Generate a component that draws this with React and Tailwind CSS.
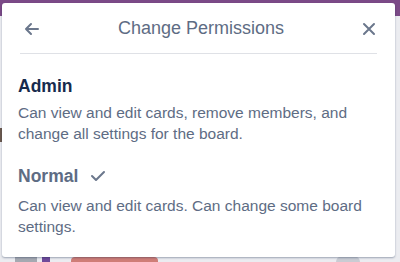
import React from "react";

export default function App() {
  return (
    <div className="relative w-[400px] h-[262px] overflow-hidden bg-[#ebecf0] pt-[3px] pl-[2px]" style={{ fontFamily: '"Liberation Sans", Arial, sans-serif' }}>
      {/* board behind the popover */}
      <div className="absolute inset-x-0 top-0 h-[16px] bg-[#7b4a87]" />
      <div className="absolute left-0 top-[128px] w-[3px] h-[14px] bg-[#6b5a4e]" />
      <div className="absolute left-0 bottom-0 flex items-end gap-[5px] pl-[15px] w-full">
        <div className="w-[22px] h-[5px] bg-[#a5a9b1]" />
        <div className="w-[8px] h-[8px] bg-[#6f4a9a]" />
        <div className="ml-[16px] w-[87px] h-[5px] rounded-t-[4px] bg-[#cf7d77]" />
        <div className="ml-auto mr-[40px] w-[24px] h-[6px] rounded-t-full bg-[#c9ccd3]" />
      </div>

      {/* popover */}
      <div className="relative w-[393px] h-[254px] bg-white rounded-[3px] shadow-[0_1px_2px_rgba(9,30,66,0.35)] px-[16px]">
        <div className="flex items-center justify-between h-[50px] pl-[6px] pr-[3px] pt-[1px]">
          <svg width="16" height="14" viewBox="0 0 16 14" fill="none" stroke="#6b778c" strokeWidth="2" strokeLinecap="round" strokeLinejoin="round">
            <path d="M14 7H2M7 2L2 7l5 5" />
          </svg>
          <span className="text-[18px] text-[#5e6c84]">Change Permissions</span>
          <svg width="14" height="14" viewBox="0 0 14 14" fill="none" stroke="#6b778c" strokeWidth="2" strokeLinecap="round">
            <path d="M2 2l10 10M12 2L2 12" />
          </svg>
        </div>
        <div className="h-px bg-[#dfe1e6] mx-[2px]" />
        <div className="pt-[22px]">
          <div className="text-[17.5px] font-bold text-[#172b4d] leading-[20px]">Admin</div>
          <p className="mt-[6px] text-[15.5px] leading-[21px] text-[#5e6c84]">
            Can view and edit cards, remove members, and change all settings for the board.
          </p>
          <div className="mt-[22px] flex items-center gap-[12px]">
            <span className="text-[17.5px] font-bold text-[#5e6c84] leading-[20px]">Normal</span>
            <svg width="16" height="12" viewBox="0 0 16 12" fill="none" stroke="#6b778c" strokeWidth="2" strokeLinecap="round" strokeLinejoin="round">
              <path d="M2 6l4 4 8-8" />
            </svg>
          </div>
          <p className="mt-[9px] text-[15.5px] leading-[21px] text-[#5e6c84]">
            Can view and edit cards. Can change some board settings.
          </p>
        </div>
      </div>
    </div>
  );
}
